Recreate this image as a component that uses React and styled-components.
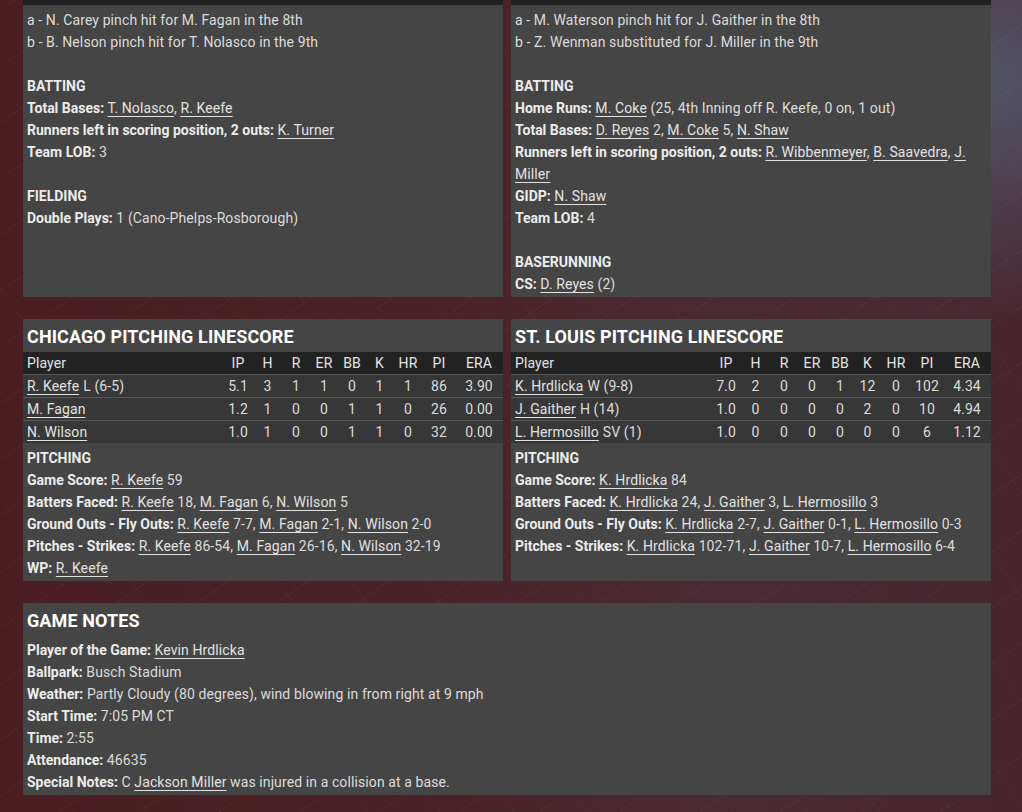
import React from "react";
import styled, { createGlobalStyle } from "styled-components";

const GlobalStyle = createGlobalStyle`
  html, body {
    margin: 0;
    padding: 0;
  }
  body {
    font-family: "Roboto", "Liberation Sans", sans-serif;
    font-size: 14px;
    letter-spacing: 0.1px;
    color: #dcdcdc;
    min-height: 812px;
    background-color: #461d22;
    background-image:
      repeating-linear-gradient(-35deg, rgba(255, 255, 255, 0.035) 0 1px, transparent 1px 46px),
      repeating-linear-gradient(55deg, rgba(255, 255, 255, 0.025) 0 1px, transparent 1px 60px),
      radial-gradient(ellipse 50% 40% at 95% 10%, rgba(84, 94, 112, 0.85), transparent 75%),
      linear-gradient(90deg, #4a1e23 0%, #4b2228 45%, #4a2a33 70%, #47252d 100%);
  }
`;

const Page = styled.div`
  display: grid;
  gap: 22px;
  width: 968px;
  padding: 0 31px 17px 23px;
`;

const Row = styled.div`
  display: grid;
  grid-template-columns: 480px 480px;
  gap: 8px;
`;

const Panel = styled.section`
  background: #454545;
  display: flex;
  flex-direction: column;
`;

const CutHeader = styled.div`
  height: 5px;
  background: #212121;
`;

const Notes = styled.div`
  padding: ${(p) => p.$pad || "4px 4px 2px"};
  line-height: 22px;
`;

const Line = styled.div`
  min-height: 22px;
`;

const Heading = styled.div`
  font-weight: 700;
  letter-spacing: 0;
  color: #ececec;
`;

const Label = styled.span`
  font-weight: 700;
  letter-spacing: 0;
  color: #ececec;
`;

const PlayerLink = styled.a`
  color: #e2e2e2;
  text-decoration: underline;
  text-underline-offset: 3px;
  text-decoration-thickness: 1px;
`;

const Title = styled.h2`
  margin: 0;
  height: 33px;
  padding: 0 4px;
  font-size: 18px;
  font-weight: 700;
  color: #ffffff;
  line-height: 36px;
  text-transform: uppercase;
`;

const Table = styled.table`
  width: 100%;
  border-collapse: collapse;
  table-layout: fixed;
`;

const HeadCell = styled.th`
  background: #222222;
  font-weight: 400;
  color: #e4e4e4;
  height: 22px;
  padding: 0;
  text-align: ${(p) => (p.$left ? "left" : "center")};
  padding-left: ${(p) => (p.$left ? "4px" : "0")};
  width: ${(p) => p.$w}px;
`;

const BodyRow = styled.tr`
  background: #373737;
  border-top: 1px solid #575757;
`;

const Cell = styled.td`
  height: 22px;
  padding: 0;
  color: #dcdcdc;
  text-align: ${(p) => (p.$left ? "left" : "center")};
  padding-left: ${(p) => (p.$left ? "4px" : "0")};
`;

const Sub = styled.span`
  margin-left: 4px;
`;

const columns = [
  ["IP", 30],
  ["H", 29],
  ["R", 28],
  ["ER", 28],
  ["BB", 28],
  ["K", 27],
  ["HR", 30],
  ["PI", 32],
  ["ERA", 48],
];

const Names = ({ items }) =>
  items.map(([name, after], i) => (
    <React.Fragment key={i}>
      {i > 0 && ", "}
      <PlayerLink>{name}</PlayerLink>
      {after ? ` ${after}` : ""}
    </React.Fragment>
  ));

const Stat = ({ label, items, children }) => (
  <Line>
    <Label>{label}:</Label> {items ? <Names items={items} /> : null}
    {children}
  </Line>
);

const Linescore = ({ team, rows, pitching }) => (
  <Panel>
    <Title>{team} Pitching Linescore</Title>
    <Table>
      <thead>
        <tr>
          <HeadCell $left>Player</HeadCell>
          {columns.map(([c, w]) => (
            <HeadCell key={c} $w={w}>
              {c}
            </HeadCell>
          ))}
        </tr>
      </thead>
      <tbody>
        {rows.map((r) => (
          <BodyRow key={r.name}>
            <Cell $left>
              <PlayerLink>{r.name}</PlayerLink>
              {r.dec && <Sub>{r.dec}</Sub>}
            </Cell>
            {r.stats.map((s, i) => (
              <Cell key={i}>{s}</Cell>
            ))}
          </BodyRow>
        ))}
      </tbody>
    </Table>
    <Notes>
      <Heading>PITCHING</Heading>
      {pitching.map((p) => (
        <Stat key={p.label} label={p.label} items={p.items} />
      ))}
    </Notes>
  </Panel>
);

const chicagoRows = [
  { name: "R. Keefe", dec: "L (6-5)", stats: ["5.1", 3, 1, 1, 0, 1, 1, 86, "3.90"] },
  { name: "M. Fagan", stats: ["1.2", 1, 0, 0, 1, 1, 0, 26, "0.00"] },
  { name: "N. Wilson", stats: ["1.0", 1, 0, 0, 1, 1, 0, 32, "0.00"] },
];

const stlRows = [
  { name: "K. Hrdlicka", dec: "W (9-8)", stats: ["7.0", 2, 0, 0, 1, 12, 0, 102, "4.34"] },
  { name: "J. Gaither", dec: "H (14)", stats: ["1.0", 0, 0, 0, 0, 2, 0, 10, "4.94"] },
  { name: "L. Hermosillo", dec: "SV (1)", stats: ["1.0", 0, 0, 0, 0, 0, 0, 6, "1.12"] },
];

const chicagoPitching = [
  { label: "Game Score", items: [["R. Keefe", "59"]] },
  { label: "Batters Faced", items: [["R. Keefe", "18"], ["M. Fagan", "6"], ["N. Wilson", "5"]] },
  { label: "Ground Outs - Fly Outs", items: [["R. Keefe", "7-7"], ["M. Fagan", "2-1"], ["N. Wilson", "2-0"]] },
  { label: "Pitches - Strikes", items: [["R. Keefe", "86-54"], ["M. Fagan", "26-16"], ["N. Wilson", "32-19"]] },
  { label: "WP", items: [["R. Keefe"]] },
];

const stlPitching = [
  { label: "Game Score", items: [["K. Hrdlicka", "84"]] },
  { label: "Batters Faced", items: [["K. Hrdlicka", "24"], ["J. Gaither", "3"], ["L. Hermosillo", "3"]] },
  { label: "Ground Outs - Fly Outs", items: [["K. Hrdlicka", "2-7"], ["J. Gaither", "0-1"], ["L. Hermosillo", "0-3"]] },
  { label: "Pitches - Strikes", items: [["K. Hrdlicka", "102-71"], ["J. Gaither", "10-7"], ["L. Hermosillo", "6-4"]] },
];

export default function App() {
  return (
    <>
      <GlobalStyle />
      <Page>
        <Row>
          <Panel>
            <CutHeader />
            <Notes>
              <Line>a - N. Carey pinch hit for M. Fagan in the 8th</Line>
              <Line>b - B. Nelson pinch hit for T. Nolasco in the 9th</Line>
              <Line />
              <Heading>BATTING</Heading>
              <Stat label="Total Bases" items={[["T. Nolasco"], ["R. Keefe"]]} />
              <Stat label="Runners left in scoring position, 2 outs" items={[["K. Turner"]]} />
              <Stat label="Team LOB">3</Stat>
              <Line />
              <Heading>FIELDING</Heading>
              <Stat label="Double Plays">1 (Cano-Phelps-Rosborough)</Stat>
            </Notes>
          </Panel>
          <Panel>
            <CutHeader />
            <Notes>
              <Line>a - M. Waterson pinch hit for J. Gaither in the 8th</Line>
              <Line>b - Z. Wenman substituted for J. Miller in the 9th</Line>
              <Line />
              <Heading>BATTING</Heading>
              <Stat label="Home Runs" items={[["M. Coke", "(25, 4th Inning off R. Keefe, 0 on, 1 out)"]]} />
              <Stat label="Total Bases" items={[["D. Reyes", "2"], ["M. Coke", "5"], ["N. Shaw"]]} />
              <Stat
                label="Runners left in scoring position, 2 outs"
                items={[["R. Wibbenmeyer"], ["B. Saavedra"], ["J. Miller"]]}
              />
              <Stat label="GIDP" items={[["N. Shaw"]]} />
              <Stat label="Team LOB">4</Stat>
              <Line />
              <Heading>BASERUNNING</Heading>
              <Stat label="CS" items={[["D. Reyes", "(2)"]]} />
            </Notes>
          </Panel>
        </Row>
        <Row>
          <Linescore team="Chicago" rows={chicagoRows} pitching={chicagoPitching} />
          <Linescore team="St. Louis" rows={stlRows} pitching={stlPitching} />
        </Row>
        <Panel>
          <Title>Game Notes</Title>
          <Notes $pad="3px 4px 2px">
            <Stat label="Player of the Game" items={[["Kevin Hrdlicka"]]} />
            <Stat label="Ballpark">Busch Stadium</Stat>
            <Stat label="Weather">Partly Cloudy (80 degrees), wind blowing in from right at 9 mph</Stat>
            <Stat label="Start Time">7:05 PM CT</Stat>
            <Stat label="Time">2:55</Stat>
            <Stat label="Attendance">46635</Stat>
            <Stat label="Special Notes">
              C <PlayerLink>Jackson Miller</PlayerLink> was injured in a collision at a base.
            </Stat>
          </Notes>
        </Panel>
      </Page>
    </>
  );
}
